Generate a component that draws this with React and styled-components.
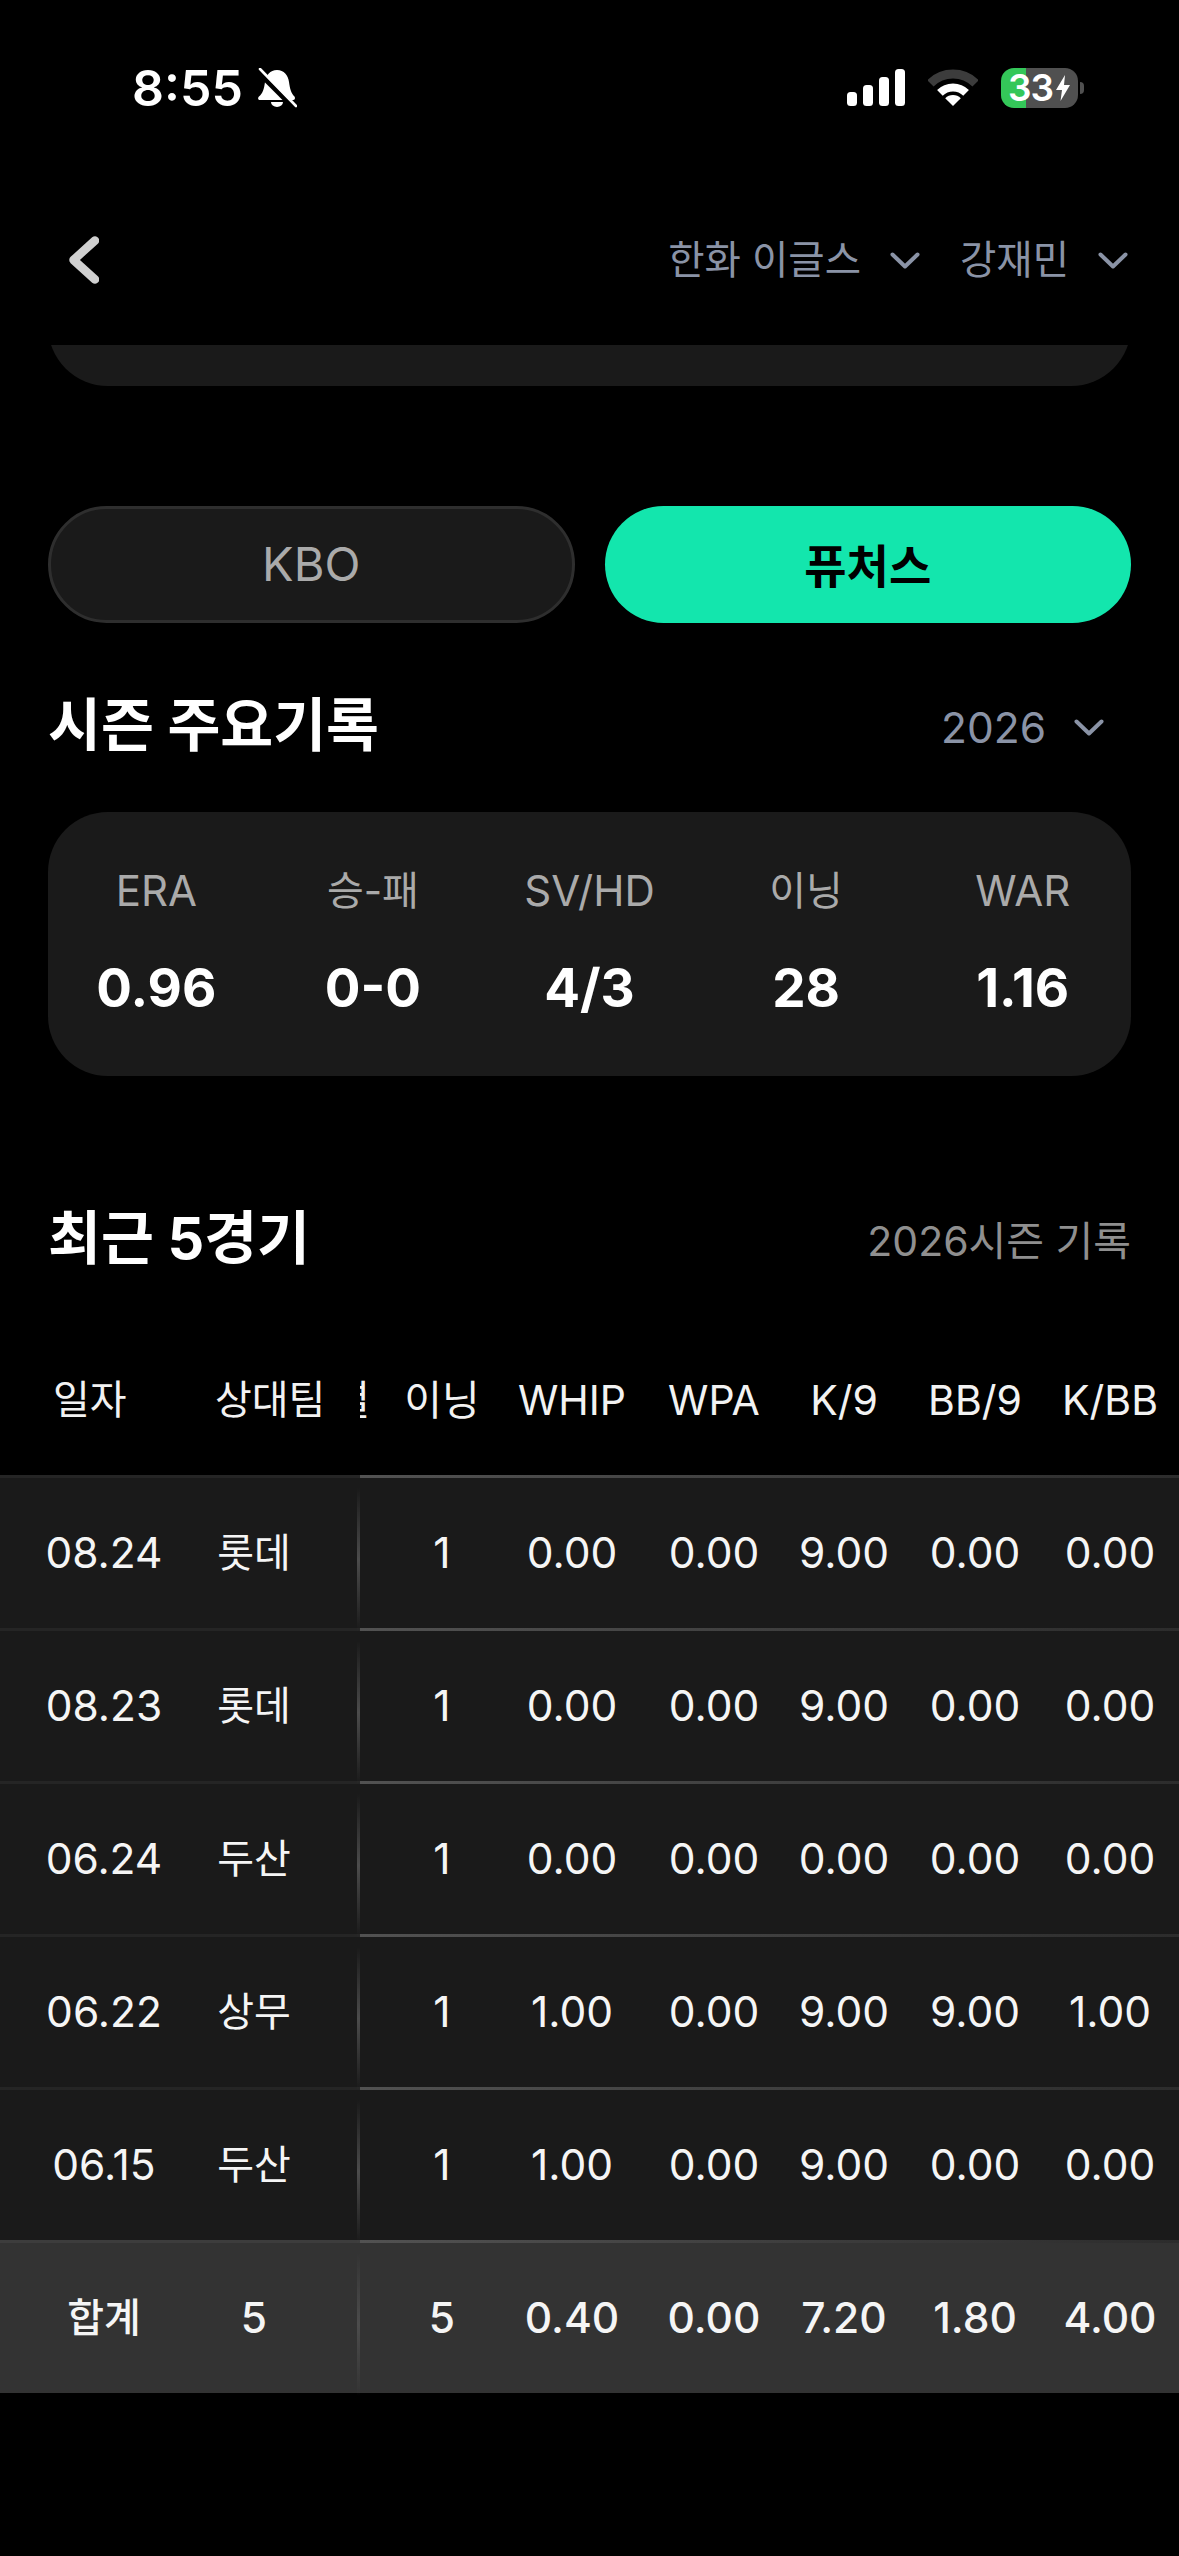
import React from 'react';
import styled, { createGlobalStyle } from 'styled-components';

const GlobalStyle = createGlobalStyle`
  html, body {
    margin: 0;
    background: #000;
    font-family: Inter, "Noto Sans CJK KR", sans-serif;
    color: #fff;
  }
`;

const Page = styled.div`
  width: 1179px;
  min-height: 2556px;
  background: #000;
  overflow: hidden;
`;

const StatusBar = styled.div`
  height: 175px;
  box-sizing: border-box;
  padding: 0 101px 0 132px;
  display: flex;
  align-items: center;
  justify-content: space-between;
`;

const StatusGroup = styled.div`
  display: flex;
  align-items: center;
  gap: ${(p) => p.$gap}px;
`;

const Time = styled.span`
  font-size: 50px;
  line-height: 50px;
  font-weight: 600;
`;

const Battery = styled.div`
  position: relative;
  width: 77px;
  height: 40px;
  border-radius: 13px;
  background: linear-gradient(90deg, #34c759 0 25px, #505050 25px);
  display: flex;
  align-items: center;
  padding-left: 7px;
  box-sizing: border-box;
  gap: 3px;

  &::after {
    content: '';
    position: absolute;
    left: 79px;
    top: 14px;
    width: 4px;
    height: 12px;
    border-radius: 0 6px 6px 0;
    background: #505050;
  }
`;

const BatteryLevel = styled.span`
  font-size: 37px;
  line-height: 40px;
  font-weight: 600;
  letter-spacing: -1px;
`;

const Header = styled.div`
  height: 170px;
  box-sizing: border-box;
  padding: 0 51px 0 69px;
  display: flex;
  align-items: center;
  justify-content: space-between;
`;

const Pickers = styled.div`
  display: flex;
  gap: 40px;
`;

const Picker = styled.div`
  display: flex;
  align-items: center;
  gap: 29px;
  font-size: 39.5px;
  line-height: 50px;
  color: #8a93a6;
`;

const CardClip = styled.div`
  height: 41px;
  margin: 0 48px;
  overflow: hidden;
  display: flex;
  align-items: flex-end;
`;

const CardTail = styled.div`
  flex: none;
  width: 100%;
  height: 140px;
  background: #1a1a1a;
  border-radius: 60px;
`;

const Tabs = styled.div`
  margin-top: 120px;
  padding: 0 48px;
  display: grid;
  grid-template-columns: 1fr 1fr;
  gap: 30px;
`;

const Tab = styled.div`
  height: 117px;
  box-sizing: border-box;
  padding-bottom: ${(p) => (p.$active ? 4 : 2)}px;
  border-radius: 59px;
  display: flex;
  align-items: center;
  justify-content: center;
  font-size: ${(p) => (p.$active ? 46 : 47)}px;
  font-weight: ${(p) => (p.$active ? 600 : 400)};
  color: ${(p) => (p.$active ? '#000' : '#aaa')};
  background: ${(p) => (p.$active ? '#13e6ad' : '#1a1a1a')};
  border: ${(p) => (p.$active ? 'none' : '3px solid #2e2e2e')};
`;

const SectionHead = styled.div`
  height: 88px;
  margin-top: ${(p) => p.$top}px;
  margin-bottom: 43px;
  padding: 0 48px;
  display: flex;
  align-items: center;
  justify-content: space-between;
`;

const SectionTitle = styled.h2`
  margin: 0;
  font-size: 57.5px;
  font-weight: 700;
  line-height: 88px;
`;

const YearPicker = styled(Picker)`
  padding: 5px 27px 0 0;
  gap: 28px;
  font-size: 42.5px;
`;

const Caption = styled.span`
  font-size: 41px;
  line-height: 50px;
  color: #8f8f8f;
  padding-top: 6px;
`;

const StatCard = styled.div`
  margin: 0 48px;
  height: 264px;
  box-sizing: border-box;
  padding-bottom: 7px;
  background: #1a1a1a;
  border-radius: 60px;
  display: grid;
  grid-template-columns: repeat(5, 1fr);
  align-content: center;
  text-align: center;
`;

const StatItem = styled.div`
  display: flex;
  flex-direction: column;
  gap: 44px;
`;

const StatLabel = styled.span`
  font-size: ${(p) => (p.$korean ? 40 : 42)}px;
  line-height: 50px;
  color: #aaa;
`;

const StatValue = styled.span`
  font-size: 53px;
  line-height: 56px;
  font-weight: 700;
`;

const TableHead = styled.div`
  height: 150px;
  display: flex;
  align-items: center;
  font-size: 41px;
  color: #f2f2f2;
`;

const FrozenHead = styled.div`
  flex: none;
  width: 360px;
  box-sizing: border-box;
  padding-left: 53px;
  display: flex;
  font-size: 40px;
  white-space: nowrap;
`;

const HeadScroller = styled.div`
  flex: 1;
  min-width: 0;
  overflow: hidden;
  display: flex;
`;

/* scrolled under the frozen columns, only its right edge still shows */
const ClippedHead = styled.div`
  flex: none;
  width: 40px;
  margin-left: -23px;
  padding-right: 7px;
  box-sizing: border-box;
  line-height: 50px;
  display: flex;
  justify-content: flex-end;
`;

const Cell = styled.div`
  flex: none;
  width: ${(p) => p.$w}px;
  line-height: 50px;
  text-align: ${(p) => p.$align || 'center'};
  white-space: nowrap;
  ${(p) => p.$korean && 'font-size: 40px;'}
`;

const Row = styled.div`
  height: 153px;
  display: flex;
  font-size: 42.5px;
  font-weight: ${(p) => (p.$total ? 500 : 400)};
  color: #f5f5f5;
  background: ${(p) => (p.$total ? '#333' : '#1a1a1a')};
`;

const Frozen = styled.div`
  position: relative;
  flex: none;
  width: 360px;
  box-sizing: border-box;
  border-top: 3px solid rgba(255, 255, 255, 0.05);
  display: flex;
  align-items: center;

  &::after {
    content: '';
    position: absolute;
    right: 0;
    top: 10px;
    bottom: -3px;
    width: 3px;
    background: linear-gradient(180deg, transparent, #4c4c4c 50%, transparent);
  }
`;

const Track = styled.div`
  flex: 1;
  min-width: 0;
  box-sizing: border-box;
  padding-left: 17px;
  border-top: 3px solid;
  border-image: linear-gradient(90deg, #525252, #2c2c2c) 1;
  overflow: hidden;
  display: flex;
  align-items: center;
`;

const COLUMNS = [130, 130, 154, 106, 156, 114];
const HEADS = ['이닝', 'WHIP', 'WPA', 'K/9', 'BB/9', 'K/BB'];

const GAMES = [
  ['08.24', '롯데', '1', '0.00', '0.00', '9.00', '0.00', '0.00'],
  ['08.23', '롯데', '1', '0.00', '0.00', '9.00', '0.00', '0.00'],
  ['06.24', '두산', '1', '0.00', '0.00', '0.00', '0.00', '0.00'],
  ['06.22', '상무', '1', '1.00', '0.00', '9.00', '9.00', '1.00'],
  ['06.15', '두산', '1', '1.00', '0.00', '9.00', '0.00', '0.00'],
];
const TOTAL = ['합계', '5', '5', '0.40', '0.00', '7.20', '1.80', '4.00'];

const STATS = [
  ['ERA', '0.96'],
  ['승-패', '0-0'],
  ['SV/HD', '4/3'],
  ['이닝', '28'],
  ['WAR', '1.16'],
];

const isKorean = (text) => /[가-힣]/.test(text);

const MutedBell = () => (
  <svg width="40" height="40" viewBox="0 0 40 40">
    <path
      fill="#fff"
      d="M20 2C27 2 31 7 32 14C33 21 34 25 37.5 28.5C38.5 30 38 32 36 32L3 32C1 32 .5 30 2 28.5C6 25 7 21 8 14C9 7 13 2 20 2Z"
    />
    <path fill="#fff" d="M14 34A6 5 0 0 0 26 34Z" />
    <path stroke="#000" strokeWidth="5" d="M0 3L36 39" />
    <path stroke="#fff" strokeWidth="2.6" strokeLinecap="round" d="M3 1L39 38" />
  </svg>
);

const Signal = () => (
  <svg width="58" height="37" viewBox="0 0 58 37" fill="#fff">
    <rect x="0" y="23" width="10" height="14" rx="3.5" />
    <rect x="16" y="16" width="10" height="21" rx="3.5" />
    <rect x="32" y="8" width="10" height="29" rx="3.5" />
    <rect x="48" y="0" width="10" height="37" rx="3.5" />
  </svg>
);

const Wifi = () => (
  <svg width="50" height="37" viewBox="0 0 50 37" fill="none">
    <path stroke="#3c3c3c" strokeWidth="9" d="M2.4 14.4A32 32 0 0 1 47.6 14.4" />
    <path stroke="#fff" strokeWidth="8" d="M11.9 23.9A18.5 18.5 0 0 1 38.1 23.9" />
    <path fill="#fff" d="M25 37L17.2 29.2A11 11 0 0 1 32.8 29.2Z" />
  </svg>
);

const Bolt = () => (
  <svg width="14" height="26" viewBox="0 0 14 26" fill="#fff">
    <path d="M9 0L0 15H6L4.5 26L14 10H8Z" />
  </svg>
);

const BackChevron = () => (
  <svg width="30" height="48" viewBox="0 0 30 48" fill="none">
    <path
      stroke="#d0d0d0"
      strokeWidth="8.5"
      strokeLinecap="round"
      strokeLinejoin="round"
      d="M26 4.5L4.5 24L26 43.5"
    />
  </svg>
);

const Chevron = () => (
  <svg width="30" height="17" viewBox="0 0 30 17" fill="none">
    <path
      stroke="#8a93a6"
      strokeWidth="4"
      strokeLinecap="round"
      strokeLinejoin="round"
      d="M2.5 2.5L15 14.5L27.5 2.5"
    />
  </svg>
);

const GameRow = ({ values, total }) => (
  <Row $total={total}>
    <Frozen>
      <Cell $w={208} $korean={isKorean(values[0])}>{values[0]}</Cell>
      <Cell $w={92} $korean={isKorean(values[1])}>{values[1]}</Cell>
    </Frozen>
    <Track>
      {values.slice(2).map((value, i) => (
        <Cell key={i} $w={COLUMNS[i]}>
          {value}
        </Cell>
      ))}
    </Track>
  </Row>
);

export default function App() {
  return (
    <Page>
      <GlobalStyle />
      <StatusBar>
        <StatusGroup $gap={14}>
          <Time>8:55</Time>
          <MutedBell />
        </StatusGroup>
        <StatusGroup $gap={23}>
          <Signal />
          <Wifi />
          <Battery>
            <BatteryLevel>33</BatteryLevel>
            <Bolt />
          </Battery>
        </StatusGroup>
      </StatusBar>

      <Header>
        <BackChevron />
        <Pickers>
          <Picker>
            한화 이글스
            <Chevron />
          </Picker>
          <Picker>
            강재민
            <Chevron />
          </Picker>
        </Pickers>
      </Header>

      <CardClip>
        <CardTail />
      </CardClip>

      <Tabs>
        <Tab>KBO</Tab>
        <Tab $active>퓨처스</Tab>
      </Tabs>

      <SectionHead $top={58}>
        <SectionTitle>시즌 주요기록</SectionTitle>
        <YearPicker>
          2026
          <Chevron />
        </YearPicker>
      </SectionHead>

      <StatCard>
        {STATS.map(([label, value]) => (
          <StatItem key={label}>
            <StatLabel $korean={isKorean(label)}>{label}</StatLabel>
            <StatValue>{value}</StatValue>
          </StatItem>
        ))}
      </StatCard>

      <SectionHead $top={118}>
        <SectionTitle>최근 5경기</SectionTitle>
        <Caption>2026시즌 기록</Caption>
      </SectionHead>

      <TableHead>
        <FrozenHead>
          <Cell $w={162} $align="left">일자</Cell>
          <Cell $w={120} $align="left">상대팀</Cell>
        </FrozenHead>
        <HeadScroller>
          <ClippedHead>
            <span>별</span>
          </ClippedHead>
          {HEADS.map((head, i) => (
            <Cell key={head} $w={COLUMNS[i]}>
              {head}
            </Cell>
          ))}
        </HeadScroller>
      </TableHead>

      {GAMES.map((game) => (
        <GameRow key={game[0]} values={game} />
      ))}
      <GameRow values={TOTAL} total />
    </Page>
  );
}
